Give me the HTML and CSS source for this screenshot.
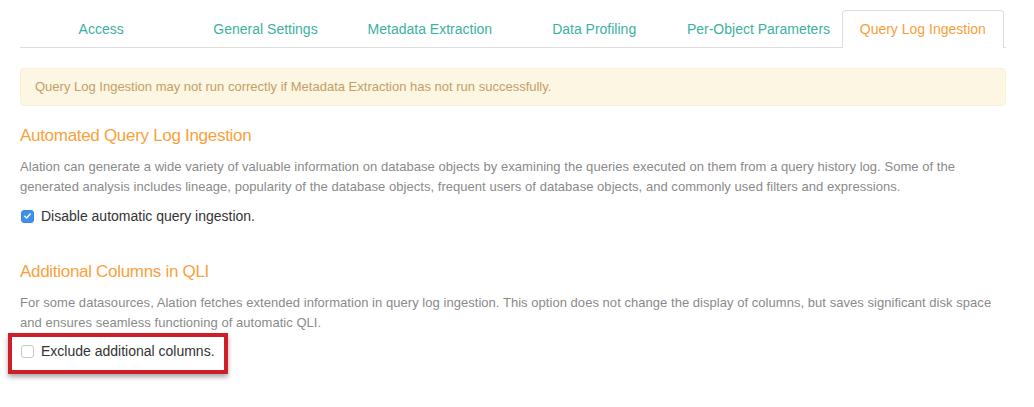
FILE: index.html
```html
<!DOCTYPE html>
<html>
<head>
<meta charset="utf-8">
<link rel="stylesheet" href="styles.css">
</head>
<body>
<div class="page">
  <ul class="tabs">
    <li class="tab"><span class="tab-link">Access</span></li>
    <li class="tab"><span class="tab-link">General Settings</span></li>
    <li class="tab"><span class="tab-link">Metadata Extraction</span></li>
    <li class="tab"><span class="tab-link">Data Profiling</span></li>
    <li class="tab"><span class="tab-link">Per-Object Parameters</span></li>
    <li class="tab active"><span class="tab-link">Query Log Ingestion</span></li>
  </ul>
  <div class="alert">Query Log Ingestion may not run correctly if Metadata Extraction has not run successfully.</div>

  <h3 class="heading first">Automated Query Log Ingestion</h3>
  <p class="desc">Alation can generate a wide variety of valuable information on database objects by examining the queries executed on them from a query history log. Some of the generated analysis includes lineage, popularity of the database objects, frequent users of database objects, and commonly used filters and expressions.</p>
  <label class="check">
    <span class="box checked"><svg width="12" height="12" viewBox="0 0 12 12"><path d="M3 6.2 L5 8.2 L9 3.8" fill="none" stroke="#fff" stroke-width="1.6" stroke-linecap="round" stroke-linejoin="round"/></svg></span>
    <span class="label">Disable automatic query ingestion.</span>
  </label>

  <h3 class="heading second">Additional Columns in QLI</h3>
  <p class="desc">For some datasources, Alation fetches extended information in query log ingestion. This option does not change the display of columns, but saves significant disk space and ensures seamless functioning of automatic QLI.</p>
  <label class="check highlighted">
    <span class="box"></span>
    <span class="label">Exclude additional columns.</span>
    <span class="redbox"></span>
  </label>
</div>
</body>
</html>
```
FILE: styles.css
```css
* { box-sizing: border-box; }
html, body { margin: 0; padding: 0; background: #fff; }
body {
  font-family: "Liberation Sans", Arial, sans-serif;
  width: 1034px;
  height: 407px;
  overflow: hidden;
}
.page {
  padding: 10px 28px 0 20px;
}
.tabs {
  list-style: none;
  margin: 0;
  padding: 0;
  display: flex;
  width: 986px;
  border-bottom: 1px solid #dddddd;
}
.tab {
  flex: 1 1 0;
  margin-bottom: -1px;
}
.tab-link {
  display: block;
  margin-right: 2px;
  height: 37px;
  line-height: 37px;
  text-align: center;
  font-size: 14px;
  color: #3cb1a2;
  border: 1px solid transparent;
  border-bottom: none;
}
.tab.active .tab-link {
  color: #f7a03a;
  background: #fff;
  border-color: #dddddd;
  border-radius: 4px 4px 0 0;
  height: 38px;
}
.alert {
  margin-top: 20px;
  width: 986px;
  height: 38px;
  background: #fcf6e2;
  border: 1px solid #f9f0d8;
  border-radius: 4px;
  padding: 0 14px;
  line-height: 36px;
  font-size: 13px;
  color: #c4a067;
}
.heading {
  margin: 0;
  font-weight: normal;
  font-size: 17px;
  letter-spacing: -0.3px;
  line-height: 24px;
  color: #f7a23d;
}
.heading.first { margin-top: 18px; }
.heading.second { margin-top: 34px; }
.desc {
  margin: 9px 0 0 0;
  font-size: 13px;
  letter-spacing: 0.04px;
  line-height: 20px;
  color: #8a8a8a;
  width: 986px;
}
.check {
  position: relative;
  display: flex;
  align-items: center;
  height: 20px;
  margin-top: 9px;
}
.check.highlighted { margin-top: 8px; }
.box {
  width: 13px;
  height: 13px;
  margin-left: 1px;
  border-radius: 3px;
  border: 1px solid #c9c9c9;
  background: #fff;
  display: flex;
  align-items: center;
  justify-content: center;
}
.box.checked {
  background: #3f90ea;
  border-color: #3a88e0;
}
.box.checked svg { display: block; }
.label {
  margin-left: 7px;
  font-size: 14px;
  color: #333;
}
.redbox {
  position: absolute;
  left: -12px;
  top: -8px;
  width: 220px;
  height: 41px;
  border: 4px solid #cc1f29;
  box-shadow: 0 3px 5px rgba(0,0,0,0.35);
}
```
